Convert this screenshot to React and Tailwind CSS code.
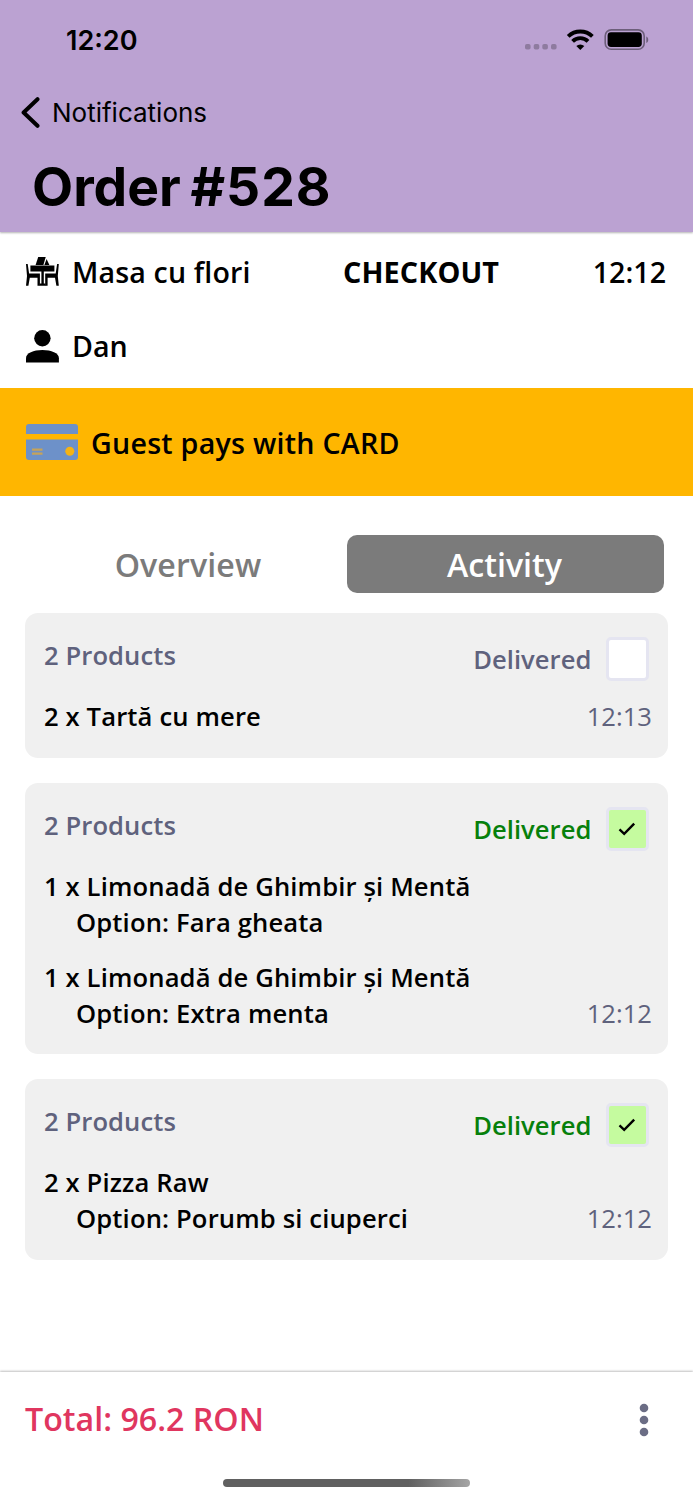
import React from "react";

const orders = [
  {
    delivered: false,
    time: "12:13",
    items: [{ name: "2 x Tartă cu mere" }],
  },
  {
    delivered: true,
    time: "12:12",
    items: [
      { name: "1 x Limonadă de Ghimbir și Mentă", option: "Fara gheata" },
      { name: "1 x Limonadă de Ghimbir și Mentă", option: "Extra menta" },
    ],
  },
  {
    delivered: true,
    time: "12:12",
    items: [{ name: "2 x Pizza Raw", option: "Porumb si ciuperci" }],
  },
];

function StatusIcons() {
  return (
    <svg width="126" height="24" viewBox="0 0 126 24" fill="none">
      <g fill="#000" fillOpacity="0.24">
        <rect x="0" y="16" width="5.6" height="5.6" rx="1.8" />
        <rect x="8.7" y="16" width="5.6" height="5.6" rx="1.8" />
        <rect x="17.3" y="16" width="5.6" height="5.6" rx="1.8" />
        <rect x="26" y="16" width="5.6" height="5.6" rx="1.8" />
      </g>
      <g stroke="#000" strokeWidth="3.9">
        <path d="M43.2 8.3a17.5 17.5 0 0 1 24.2 0" />
        <path d="M47.6 13.3a11 11 0 0 1 15.4 0" />
      </g>
      <path d="M55.3 22l-4-4a5.8 5.8 0 0 1 8 0z" fill="#000" />
      <rect x="80.2" y="1.9" width="39" height="19.4" rx="6" stroke="#000" strokeOpacity="0.42" strokeWidth="1.6" />
      <rect x="82.6" y="4.3" width="34.2" height="14.6" rx="3.4" fill="#000" />
      <path d="M121.3 8.5c2.6 1.1 2.6 5.5 0 6.6z" fill="#000" fillOpacity="0.42" />
    </svg>
  );
}

function TableIcon() {
  return (
    <svg width="33" height="30" viewBox="0 0 33 30" fill="#000">
      <path d="M12.2 0h7.5l-2.3 8H9.6z" />
      <path d="M20.6 2l2.8 6h-5z" />
      <path d="M4.4 8.6h24v5.8H17.8v12.2h1.8v2.2h-6v-2.2h1.8V14.4H4.4z" />
      <path d="M0 7h1.7l1.4 9.4h10.8v12.3h-2.4v-8H3.8l-1.4 8H0l1-9.8z" />
      <path d="M32.8 7h-1.7l-1.4 9.4H19.2v12.3h2.4v-8H29l1.4 8h2.4l-1-9.8z" />
    </svg>
  );
}

function PersonIcon() {
  return (
    <svg width="33" height="33" viewBox="0 0 33 33" fill="#000">
      <circle cx="16.4" cy="8.2" r="8.2" />
      <path d="M0 32.4v-4.2c0-5 7.5-8.1 16.4-8.1s16.5 3.1 16.5 8.1v4.2z" />
    </svg>
  );
}

function CardIcon() {
  return (
    <svg width="52" height="36" viewBox="0 0 52 36">
      <path d="M3 0h46a3 3 0 0 1 3 3v7H0V3a3 3 0 0 1 3-3z" fill="#6d91c9" />
      <path d="M0 15.5h52V33a3 3 0 0 1-3 3H3a3 3 0 0 1-3-3z" fill="#6d91c9" />
      <path d="M6 25.6h10.5M6 29.6h10.5" stroke="#c5a35b" strokeWidth="2.2" />
      <circle cx="43.8" cy="27.2" r="4.5" fill="#f5b313" />
    </svg>
  );
}

function DeliveredBox({ checked }) {
  return (
    <div className="flex items-center gap-[14px]">
      <span
        className={`pt-0.5 text-[25.6px] leading-[36px] font-semibold tracking-[0.05px] ${
          checked ? "text-[#07800b]" : "text-[#5f627d]"
        }`}
      >
        Delivered
      </span>
      <div
        className={`flex h-11 w-[43.5px] items-center justify-center rounded-[5px] border-3 border-[#e5e5f1] ${
          checked ? "bg-[#c5fb9f]" : "bg-white"
        }`}
      >
        {checked && (
          <svg width="18" height="14" viewBox="0 0 18 14" fill="none">
            <path d="M1.5 7.3l4.7 4.5L16.2 1.7" stroke="#000" strokeWidth="2.4" />
          </svg>
        )}
      </div>
    </div>
  );
}

function OrderCard({ order }) {
  return (
    <div className="rounded-[13px] bg-[#f0f0f0] pt-6 pr-[19px] pb-[23.2px] pl-[19px]">
      <div className="flex h-[62px] items-start justify-between">
        <span className="pt-px text-[25.6px] leading-[36px] font-semibold tracking-[0.08px] text-[#5f627d]">
          2 Products
        </span>
        <DeliveredBox checked={order.delivered} />
      </div>
      <div className="flex items-end justify-between">
        <div className="flex flex-col gap-[19.5px] text-[25.6px] leading-[35.7px] font-semibold tracking-[0.14px] text-black">
          {order.items.map((item, i) => (
            <div key={i}>
              <div>{item.name}</div>
              {item.option && <div className="pl-8">Option: {item.option}</div>}
            </div>
          ))}
        </div>
        <span className="-mr-[3px] text-[25.6px] leading-[35.7px] text-[#5f627d]">
          {order.time}
        </span>
      </div>
    </div>
  );
}

export default function App() {
  return (
    <div className="flex h-[1500px] w-[693px] flex-col overflow-hidden bg-white font-['Open_Sans',sans-serif] whitespace-nowrap text-black">
      <header className="z-10 h-[232px] shrink-0 bg-[#bba2d2] font-['Inter',sans-serif] shadow-[0_1px_2px_rgba(0,0,0,0.3)]">
        <div className="flex h-20 items-center justify-between pr-[42px] pl-[66px]">
          <span className="pt-0.5 text-[27px] font-semibold">12:20</span>
          <StatusIcons />
        </div>
        <div className="flex h-16 items-center gap-3 pl-[21px]">
          <svg width="19" height="31" viewBox="0 0 19 31" fill="none">
            <path
              d="M16.5 2.2L2.6 15.5l13.9 13.3"
              stroke="#000"
              strokeWidth="4"
              strokeLinecap="round"
              strokeLinejoin="round"
            />
          </svg>
          <span className="text-[26px]">Notifications</span>
        </div>
        <h1 className="pl-8 text-[53.4px] leading-[86px] font-bold [word-spacing:-3px]">
          Order <span className="tracking-[1px]">#528</span>
        </h1>
      </header>

      <section className="h-[156px] shrink-0 px-[26px] text-[28.6px] font-semibold">
        <div className="flex h-20 items-center pr-px">
          <div className="flex w-[317px] items-center gap-[13px]">
            <TableIcon />
            <span className="tracking-[0.15px]">Masa cu flori</span>
          </div>
          <span className="text-[28.8px] font-bold tracking-[0.1px]">
            CHECKOUT
          </span>
          <span className="ml-auto">12:12</span>
        </div>
        <div className="flex h-[68px] items-center gap-[13px]">
          <PersonIcon />
          <span>Dan</span>
        </div>
      </section>

      <section className="flex h-[108px] shrink-0 items-center gap-[13px] bg-[#ffb600] pl-[26px] text-[28.6px] font-semibold tracking-[0.26px]">
        <CardIcon />
        <span className="pt-0.5">Guest pays with CARD</span>
      </section>

      <main className="flex-1 px-[25px] pt-[39px]">
        <div className="flex h-[58px] pr-1 pl-1 text-[32.2px] font-semibold">
          <button className="flex-1 pt-0.5 tracking-[0.1px] text-[#7b7b7b]">
            Overview
          </button>
          <button className="w-[317px] rounded-[10px] bg-[#7b7b7b] pt-0.5 pr-0.5 text-white">
            Activity
          </button>
        </div>
        <div className="mt-5 flex flex-col gap-[25px]">
          {orders.map((order, i) => (
            <OrderCard key={i} order={order} />
          ))}
        </div>
      </main>

      <footer className="flex h-[128px] shrink-0 flex-col items-center bg-white shadow-[0_-1px_2px_rgba(0,0,0,0.25)]">
        <div className="flex h-24 w-full items-center justify-between pr-[44px] pl-[25px]">
          <span className="pb-0.5 text-[32.2px] font-semibold text-[#e0365f]">
            Total: 96.2 RON
          </span>
          <svg width="10" height="34" viewBox="0 0 10 34" fill="#6b6d85">
            <circle cx="5" cy="5" r="4.3" />
            <circle cx="5" cy="17" r="4.3" />
            <circle cx="5" cy="29" r="4.3" />
          </svg>
        </div>
        <div className="mt-[11px] h-2 w-[247px] rounded-full bg-linear-to-r from-[#606060] from-75% to-[#a5a5a5]" />
      </footer>
    </div>
  );
}
